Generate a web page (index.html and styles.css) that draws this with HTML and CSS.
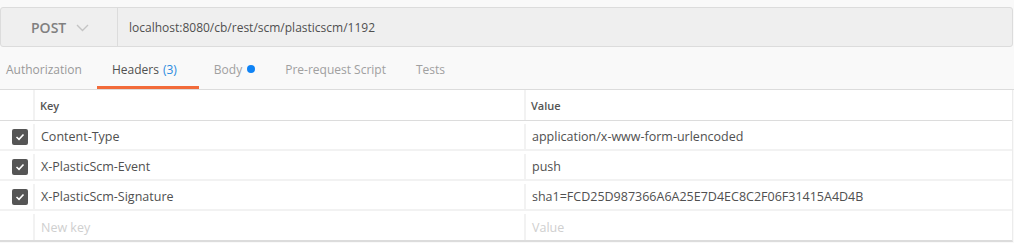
FILE: index.html
```
<!DOCTYPE html>
<html>
<head>
<meta charset="utf-8">
<link rel="stylesheet" href="styles.css">
</head>
<body>
<div class="page">
  <div class="request-bar">
    <div class="method">
      <span class="method-name">POST</span>
      <svg class="chev" width="13" height="8" viewBox="0 0 13 8"><path d="M1 1 L6.5 6.5 L12 1" fill="none" stroke="#c4c4c4" stroke-width="1.4"/></svg>
    </div>
    <div class="url">localhost:8080/cb/rest/scm/plasticscm/1192</div>
  </div>
  <div class="tabs">
    <div class="tab">Authorization</div>
    <div class="tab active">Headers <span class="count">(3)</span></div>
    <div class="tab">Body <span class="dot"></span></div>
    <div class="tab">Pre-request Script</div>
    <div class="tab">Tests</div>
  </div>
  <div class="table">
    <div class="row head">
      <div class="c-check"></div>
      <div class="c-key">Key</div>
      <div class="c-val">Value</div>
    </div>
    <div class="row">
      <div class="c-check"><span class="cb"><svg width="10" height="8" viewBox="0 0 10 8"><path d="M1.5 4 L4 6.3 L8.5 1.5" fill="none" stroke="#fff" stroke-width="1.6"/></svg></span></div>
      <div class="c-key">Content-Type</div>
      <div class="c-val">application/x-www-form-urlencoded</div>
    </div>
    <div class="row">
      <div class="c-check"><span class="cb"><svg width="10" height="8" viewBox="0 0 10 8"><path d="M1.5 4 L4 6.3 L8.5 1.5" fill="none" stroke="#fff" stroke-width="1.6"/></svg></span></div>
      <div class="c-key">X-PlasticScm-Event</div>
      <div class="c-val">push</div>
    </div>
    <div class="row">
      <div class="c-check"><span class="cb"><svg width="10" height="8" viewBox="0 0 10 8"><path d="M1.5 4 L4 6.3 L8.5 1.5" fill="none" stroke="#fff" stroke-width="1.6"/></svg></span></div>
      <div class="c-key">X-PlasticScm-Signature</div>
      <div class="c-val">sha1=FCD25D987366A6A25E7D4EC8C2F06F31415A4D4B</div>
    </div>
    <div class="row last">
      <div class="c-check"></div>
      <div class="c-key placeholder">New key</div>
      <div class="c-val placeholder">Value</div>
    </div>
  </div>
</div>
</body>
</html>
```
FILE: styles.css
```
* { box-sizing: border-box; }
html, body { margin: 0; padding: 0; }
body {
  background: #f9f9f9;
  font-family: "Open Sans", "Noto Sans", sans-serif;
  font-size: 12px;
  color: #505050;
  width: 1014px;
  height: 243px;
  overflow: hidden;
}
.page { padding-top: 7px; }
.request-bar {
  display: flex;
  height: 40px;
  margin-right: 1px;
  background: #efefef;
  border: 1px solid #dcdcdc;
  border-radius: 3px;
}
.method {
  width: 117px;
  display: flex;
  align-items: center;
  padding-left: 30px;
  gap: 10px;
  border-right: 1px solid #dcdcdc;
}
.method-name {
  font-size: 14px;
  font-weight: 600;
  color: #808080;
}
.chev { margin-top: 1px; }
.url {
  display: flex;
  align-items: center;
  padding-left: 11px;
  font-size: 12px;
  color: #505050;
}
.tabs {
  display: flex;
  height: 43px;
  border-bottom: 1px solid #dcdcdc;
}
.tab {
  display: flex;
  align-items: center;
  height: 42px;
  padding: 5px 15px 0;
  font-size: 12px;
  color: #a0a0a0;
  border-bottom: 3px solid transparent;
  margin-bottom: -1px;
}
.tab:first-child { padding-left: 6px; color: #999; }
.tab.active {
  color: #505050;
  border-bottom-color: #f26b3a;
  padding-right: 22px;
}
.count { color: #2a8ae0; margin-left: 4px; }
.dot {
  display: inline-block;
  width: 8px;
  height: 8px;
  border-radius: 50%;
  background: #0f83f5;
  margin-left: 5px;
}
.table {
  border-bottom: 2px solid #dcdcdc;
  margin-right: 1px;
  border-right: 1px solid #ececec;
}
.row {
  display: flex;
  height: 30px;
  padding-top: 3px;
  background: #fff;
  border-bottom: 2px solid #f2f2f2;
  font-size: 12.5px;
}
.row.head {
  height: 31px;
  padding-top: 0;
  border-bottom: 1px solid #dcdcdc;
  font-size: 11px;
  font-weight: 600;
  color: #555;
}
.row.last { border-bottom: 0; height: 29px; }
.c-check {
  width: 35px;
  border-right: 2px solid #f2f2f2;
  display: flex;
  align-items: center;
  padding-left: 12px;
}
.c-key {
  width: 491px;
  border-right: 2px solid #f2f2f2;
  display: flex;
  align-items: center;
  padding-left: 6px;
}
.c-val {
  flex: 1;
  display: flex;
  align-items: center;
  padding-left: 6px;
}
.head .c-key, .head .c-val { padding-left: 5px; }
.cb {
  width: 16px;
  height: 16px;
  border-radius: 2px;
  background: #555;
  display: flex;
  align-items: center;
  justify-content: center;
}
.placeholder { color: #cfcfcf; }
```
